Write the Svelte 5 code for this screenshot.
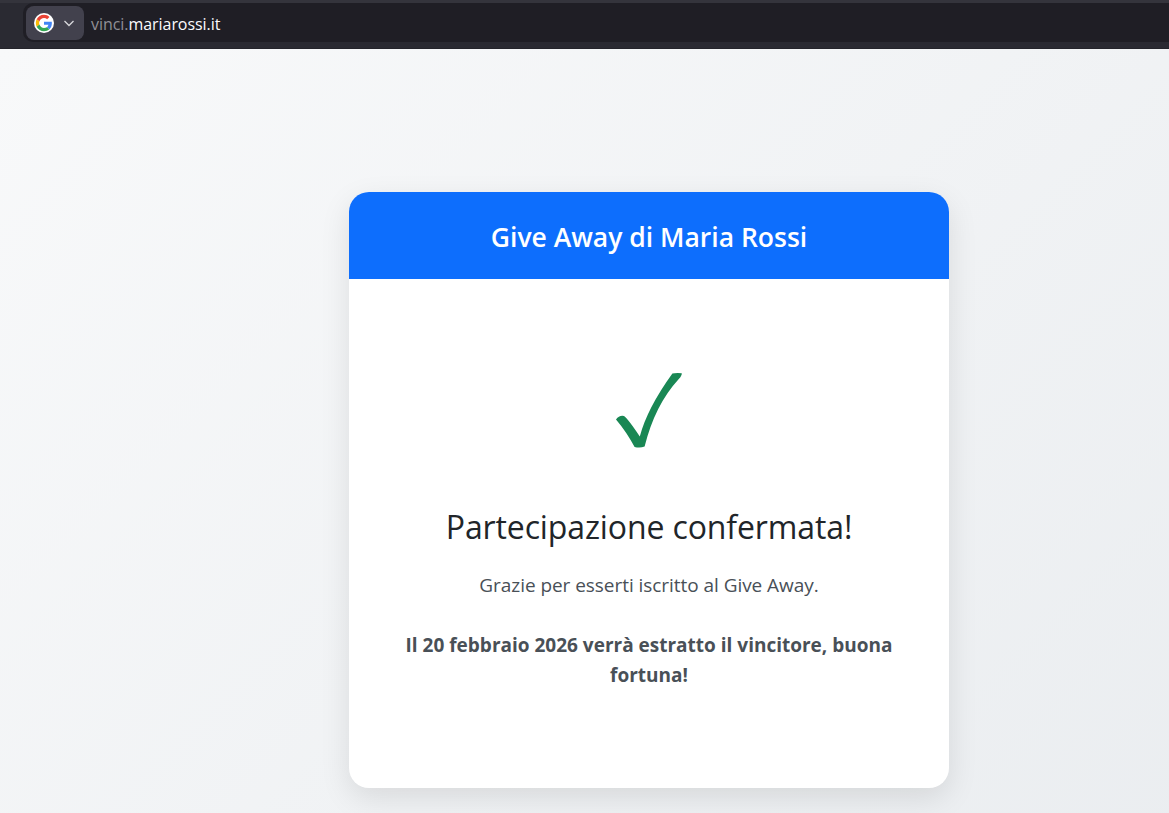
<script>
  const title = 'Give Away di Maria Rossi';
</script>

<div class="shell">
  <header class="toolbar">
    <div class="omni">
      <div class="chip">
        <svg class="g" viewBox="0 0 48 48" width="20" height="20" aria-hidden="true">
          <circle cx="24" cy="24" r="24" fill="#fff"/>
          <g transform="translate(24 24) scale(.82) translate(-24 -24)">
            <path fill="#EA4335" d="M24 9.5c3.54 0 6.71 1.22 9.21 3.6l6.85-6.85C35.9 2.38 30.47 0 24 0 14.62 0 6.51 5.38 2.56 13.22l7.98 6.19C12.43 13.72 17.74 9.5 24 9.5z"/>
            <path fill="#4285F4" d="M46.98 24.55c0-1.57-.15-3.09-.38-4.55H24v9.02h12.94c-.58 2.96-2.26 5.48-4.78 7.18l7.73 6c4.51-4.18 7.09-10.36 7.09-17.65z"/>
            <path fill="#FBBC05" d="M10.53 28.59c-.48-1.45-.76-2.99-.76-4.59s.27-3.14.76-4.59l-7.98-6.19C.92 16.46 0 20.12 0 24c0 3.88.92 7.54 2.56 10.78l7.97-6.19z"/>
            <path fill="#34A853" d="M24 48c6.48 0 11.93-2.13 15.89-5.81l-7.73-6c-2.15 1.45-4.92 2.3-8.16 2.3-6.26 0-11.57-4.22-13.47-9.91l-7.98 6.19C6.51 42.62 14.62 48 24 48z"/>
          </g>
        </svg>
        <svg class="chev" viewBox="0 0 12 12" width="12" height="12" aria-hidden="true">
          <path d="M1.5 4 L6 8.5 L10.5 4" fill="none" stroke="#d8d8dc" stroke-width="1.3"/>
        </svg>
      </div>
      <span class="url"><span class="dim">vinci.</span>mariarossi.it</span>
    </div>
  </header>

  <main class="page">
    <section class="card">
      <div class="card-head"><h1>{title}</h1></div>
      <div class="card-body">
        <svg class="check" viewBox="4 0 110 100" width="110" height="100" aria-label="Confermato">
          <path fill="#198754" d="M26 59.4 Q29.3 55 34 56 Q38.5 59.5 49.8 76.5 Q57.3 48.3 82.4 13.6 Q85 12.8 91.8 13.2 Q92 15.5 88.8 19 Q64.9 45 54.6 86.6 Q50 88.4 44.6 87 Q36.7 72 26 59.4 Z"/>
        </svg>
        <h2>Partecipazione confermata!</h2>
        <p class="lead">Grazie per esserti iscritto al Give Away.</p>
        <p class="strong">Il 20 febbraio 2026 verrà estratto il vincitore, buona fortuna!</p>
      </div>
    </section>
  </main>
</div>

<style>
  :global(body) {
    margin: 0;
    overflow: hidden;
  }
  .shell {
    width: 1169px;
    height: 813px;
    display: flex;
    flex-direction: column;
    font-family: "Open Sans", "Noto Sans", sans-serif;
  }
  .toolbar {
    height: 49px;
    box-sizing: border-box;
    flex: none;
    background: linear-gradient(#34343c 0, #34343c 3px, #2a2a32 3px, #2a2a32 100%);
    padding: 3px 0 4px 23px;
    border-bottom: 1px solid #24242b;
  }
  .omni {
    height: 39px;
    background: #1f1e25;
    border-radius: 10px 0 0 10px;
    display: flex;
    align-items: center;
    padding-left: 3px;
    gap: 7px;
  }
  .chip {
    width: 58px;
    height: 34px;
    background: #42414d;
    border-radius: 8px;
    display: flex;
    align-items: center;
    box-sizing: border-box;
    padding-left: 8px;
    gap: 9px;
  }
  .url {
    font-size: 16px;
    line-height: 20px;
    padding-top: 3px;
    color: #fbfbfe;
    letter-spacing: -0.05px;
  }
  .dim {
    color: #8f8f96;
  }
  .page {
    flex: 1;
    background: linear-gradient(135deg, #f8f9fa 0%, #e9ecef 100%) no-repeat;
    background-size: 1298px 882px;
    background-color: #e9ecef;
    padding: 143px 0 0 349px;
  }
  .card {
    width: 600px;
    height: 596px;
    background: #fff;
    border-radius: 20px;
    overflow: hidden;
    box-shadow: 0 10px 30px rgba(0, 0, 0, 0.1);
    display: flex;
    flex-direction: column;
  }
  .card-head {
    height: 87px;
    flex: none;
    background: #0d6efd;
    display: flex;
    align-items: center;
    justify-content: center;
    padding-top: 2px;
    box-sizing: border-box;
  }
  h1 {
    margin: 0;
    color: #fff;
    font-size: 26.5px;
    font-weight: 600;
  }
  .card-body {
    display: flex;
    flex-direction: column;
    align-items: center;
    text-align: center;
    padding: 81px 48px 0;
  }
  .check {
    display: block;
  }
  h2 {
    margin: 48px 0 0;
    font-size: 32px;
    line-height: 38px;
    font-weight: 400;
    color: #212529;
    letter-spacing: -0.12px;
  }
  .lead {
    margin: 24px 0 0;
    font-size: 19px;
    line-height: 30px;
    color: #495057;
    letter-spacing: -0.05px;
  }
  .strong {
    margin: 30px 0 0;
    font-size: 19px;
    line-height: 30px;
    font-weight: 700;
    color: #495057;
  }
</style>
